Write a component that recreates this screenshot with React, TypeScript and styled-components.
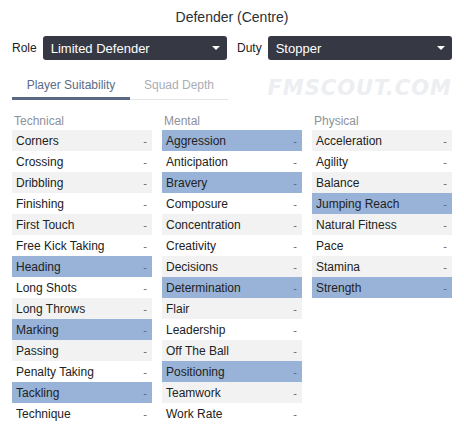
import React from "react";
import styled, { createGlobalStyle } from "styled-components";

const GlobalStyle = createGlobalStyle`
    html, body {
        margin: 0;
        padding: 0;
        background: #ffffff;
    }
    body {
        font-family: "Liberation Sans", Arial, sans-serif;
        color: #222;
    }
`;

const Page = styled.div`
    width: 464px;
    height: 439px;
    box-sizing: border-box;
    padding: 0 12px;
    overflow: hidden;
`;

const Title = styled.div`
    text-align: center;
    font-size: 14px;
    color: #2b2e36;
    padding-top: 9px;
    height: 36px;
    box-sizing: border-box;
`;

const SelectRow = styled.div`
    display: flex;
    align-items: center;
    gap: 10px;
`;

const Field = styled.div`
    display: flex;
    align-items: center;
    gap: 6px;
    flex: 1;
`;

const Label = styled.span`
    font-size: 12px;
    color: #222;
`;

const Select = styled.div`
    flex: 1;
    height: 24px;
    border-radius: 3px;
    background: #363944;
    color: #fff;
    font-size: 13px;
    display: flex;
    align-items: center;
    justify-content: space-between;
    padding: 0 7px 0 8px;
`;

const Caret = styled.span`
    width: 0;
    height: 0;
    border-left: 4px solid transparent;
    border-right: 4px solid transparent;
    border-top: 4px solid #fff;
`;

const TabBar = styled.div`
    display: flex;
    align-items: flex-end;
    justify-content: space-between;
    margin-top: 15px;
    height: 25px;
`;

const Tabs = styled.div`
    display: flex;
    width: 216px;
    border-bottom: 1px solid #e2e4e8;
`;

const Tab = styled.div<{ $active?: boolean }>`
    width: ${p => (p.$active ? "118px" : "98px")};
    text-align: center;
    font-size: 12px;
    color: ${p => (p.$active ? "#5b6b86" : "#a9adb5")};
    padding-bottom: 5px;
    margin-bottom: -1px;
    border-bottom: 3px solid ${p => (p.$active ? "#5a6884" : "transparent")};
`;

const Watermark = styled.div`
    font-family: "DejaVu Sans", sans-serif;
    font-weight: bold;
    font-style: italic;
    font-size: 21px;
    letter-spacing: 1px;
    color: #eceef1;
`;

const Columns = styled.div`
    display: grid;
    grid-template-columns: repeat(3, 140px);
    gap: 10px;
    margin-top: 14px;
`;

const Header = styled.div`
    font-size: 12px;
    color: #8d929b;
    height: 16px;
    line-height: 14px;
    padding-left: 2px;
`;

const Row = styled.div<{ $hl: boolean; $odd: boolean }>`
    display: flex;
    justify-content: space-between;
    align-items: center;
    height: 21px;
    padding: 0 5px 0 4px;
    font-size: 12px;
    color: #222;
    background: ${p => (p.$hl ? "#98b2d8" : p.$odd ? "#f2f2f2" : "#ffffff")};
`;

const Dash = styled.span`
    color: #666;
    font-size: 11px;
`;

interface Attr {
    name: string;
    hl?: boolean;
}

const columns: { title: string; attrs: Attr[] }[] = [
    {
        title: "Technical",
        attrs: [
            { name: "Corners" },
            { name: "Crossing" },
            { name: "Dribbling" },
            { name: "Finishing" },
            { name: "First Touch" },
            { name: "Free Kick Taking" },
            { name: "Heading", hl: true },
            { name: "Long Shots" },
            { name: "Long Throws" },
            { name: "Marking", hl: true },
            { name: "Passing" },
            { name: "Penalty Taking" },
            { name: "Tackling", hl: true },
            { name: "Technique" },
        ],
    },
    {
        title: "Mental",
        attrs: [
            { name: "Aggression", hl: true },
            { name: "Anticipation" },
            { name: "Bravery", hl: true },
            { name: "Composure" },
            { name: "Concentration" },
            { name: "Creativity" },
            { name: "Decisions" },
            { name: "Determination", hl: true },
            { name: "Flair" },
            { name: "Leadership" },
            { name: "Off The Ball" },
            { name: "Positioning", hl: true },
            { name: "Teamwork" },
            { name: "Work Rate" },
        ],
    },
    {
        title: "Physical",
        attrs: [
            { name: "Acceleration" },
            { name: "Agility" },
            { name: "Balance" },
            { name: "Jumping Reach", hl: true },
            { name: "Natural Fitness" },
            { name: "Pace" },
            { name: "Stamina" },
            { name: "Strength", hl: true },
        ],
    },
];

export default function App(): JSX.Element {
    return <Page>
        <GlobalStyle />
        <Title>Defender (Centre)</Title>
        <SelectRow>
            <Field>
                <Label>Role</Label>
                <Select>Limited Defender<Caret /></Select>
            </Field>
            <Field>
                <Label>Duty</Label>
                <Select>Stopper<Caret /></Select>
            </Field>
        </SelectRow>
        <TabBar>
            <Tabs>
                <Tab $active>Player Suitability</Tab>
                <Tab>Squad Depth</Tab>
            </Tabs>
            <Watermark>FMSCOUT.COM</Watermark>
        </TabBar>
        <Columns>
            {columns.map(col =>
                <div key={col.title}>
                    <Header>{col.title}</Header>
                    {col.attrs.map((a, i) =>
                        <Row key={a.name} $hl={!!a.hl} $odd={i % 2 === 0}>
                            <span>{a.name}</span>
                            <Dash>-</Dash>
                        </Row>
                    )}
                </div>
            )}
        </Columns>
    </Page>;
}
